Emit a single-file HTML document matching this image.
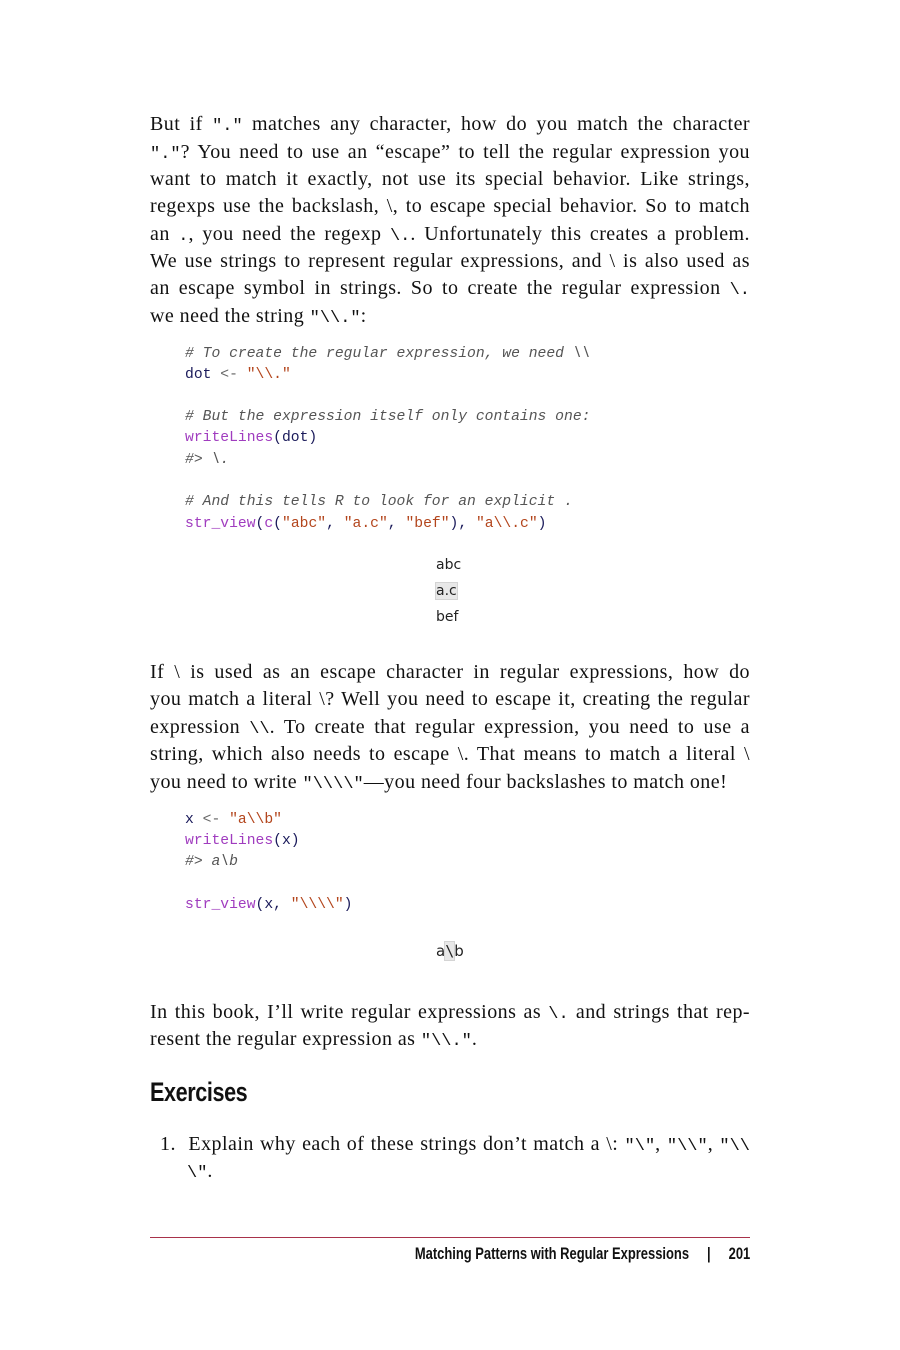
<!DOCTYPE html>
<html><head><meta charset="utf-8"><style>
html,body{margin:0;padding:0;background:#fff;}
body{width:900px;height:1350px;position:relative;overflow:hidden;}
.l{position:absolute;left:150px;width:600px;font-family:"Liberation Serif",serif;font-size:20px;letter-spacing:0.45px;line-height:28px;height:28px;color:#111;text-align:justify;text-align-last:justify;white-space:nowrap;}
.l.n{text-align-last:left;}
.m{font-family:"Liberation Mono",monospace;font-size:17px;letter-spacing:0;}
.c{position:absolute;left:185px;font-family:"Liberation Mono",monospace;font-size:14.7px;line-height:21px;height:21px;white-space:pre;color:#1a1a5a;}
.cm{color:#555;font-style:italic;}
.f{color:#a03cbf;}
.s{color:#b3451c;}
.o{position:absolute;left:436px;font-family:"DejaVu Sans",sans-serif;font-size:14px;line-height:20px;color:#222;}
.hl{background:#e8e8e8;outline:1px solid #d4d4d4;}
</style></head><body>
<div class="l" style="top:110px">But if <span class="m">"."</span> matches any character, how do you match the character</div>
<div class="l" style="top:138px"><span class="m">"."</span>? You need to use an “escape” to tell the regular expression you</div>
<div class="l" style="top:165px">want to match it exactly, not use its special behavior. Like strings,</div>
<div class="l" style="top:192px">regexps use the backslash, \, to escape special behavior. So to match</div>
<div class="l" style="top:220px">an <span class="m">.</span>, you need the regexp <span class="m">\.</span>. Unfortunately this creates a problem.</div>
<div class="l" style="top:247px">We use strings to represent regular expressions, and \ is also used as</div>
<div class="l" style="top:274px">an escape symbol in strings. So to create the regular expression <span class="m">\.</span></div>
<div class="l n" style="top:302px">we need the string <span class="m">"\\."</span>:</div>

<div class="c cm" style="top:344px"># To create the regular expression, we need \\</div>
<div class="c" style="top:365px">dot <span style="color:#666">&lt;-</span> <span class="s">"\\."</span></div>
<div class="c cm" style="top:407px"># But the expression itself only contains one:</div>
<div class="c" style="top:428px"><span class="f">writeLines</span>(dot)</div>
<div class="c cm" style="top:450px">#&gt; \.</div>
<div class="c cm" style="top:492px"># And this tells R to look for an explicit .</div>
<div class="c" style="top:514px"><span class="f">str_view</span>(<span class="f">c</span>(<span class="s">"abc"</span>, <span class="s">"a.c"</span>, <span class="s">"bef"</span>), <span class="s">"a\\.c"</span>)</div>

<div class="o" style="top:555px">abc</div>
<div class="o" style="top:581px"><span class="hl">a.c</span></div>
<div class="o" style="top:607px">bef</div>

<div class="l" style="top:658px">If \ is used as an escape character in regular expressions, how do</div>
<div class="l" style="top:685px">you match a literal \? Well you need to escape it, creating the regular</div>
<div class="l" style="top:713px">expression <span class="m">\\</span>. To create that regular expression, you need to use a</div>
<div class="l" style="top:740px">string, which also needs to escape \. That means to match a literal \</div>
<div class="l n" style="top:768px">you need to write <span class="m">"\\\\"</span>—you need four backslashes to match one!</div>

<div class="c" style="top:810px">x <span style="color:#666">&lt;-</span> <span class="s">"a\\b"</span></div>
<div class="c" style="top:831px"><span class="f">writeLines</span>(x)</div>
<div class="c cm" style="top:852px">#&gt; a\b</div>
<div class="c" style="top:895px"><span class="f">str_view</span>(x, <span class="s">"\\\\"</span>)</div>

<div class="o" style="top:941px;font-size:15px">a<span class="hl" style="font-family:'DejaVu Sans Mono',monospace">\</span>b</div>

<div class="l" style="top:998px">In this book, I’ll write regular expressions as <span class="m">\.</span> and strings that rep-</div>
<div class="l n" style="top:1025px">resent the regular expression as <span class="m">"\\."</span>.</div>

<div style="position:absolute;left:150px;top:1074px;font-family:'Liberation Sans',sans-serif;font-weight:bold;font-size:27px;line-height:36px;transform:scaleX(0.8);transform-origin:left;color:#111;letter-spacing:-0.5px">Exercises</div>

<div class="l" style="top:1130px;left:160px;width:590px">1.&nbsp; Explain why each of these strings don’t match a \: <span class="m">"\"</span>, <span class="m">"\\"</span>, <span class="m">"\\</span></div>
<div class="l n" style="top:1157px;left:187px;width:563px"><span class="m">\"</span>.</div>

<div style="position:absolute;left:150px;top:1237px;width:600px;height:1px;background:#a8324a"></div>
<div style="position:absolute;right:150px;top:1244px;font-family:'Liberation Sans',sans-serif;font-weight:bold;font-size:16.2px;line-height:20px;color:#111;transform:scaleX(0.8);transform-origin:right;white-space:pre">Matching Patterns with Regular Expressions     |     201</div>
</body></html>
